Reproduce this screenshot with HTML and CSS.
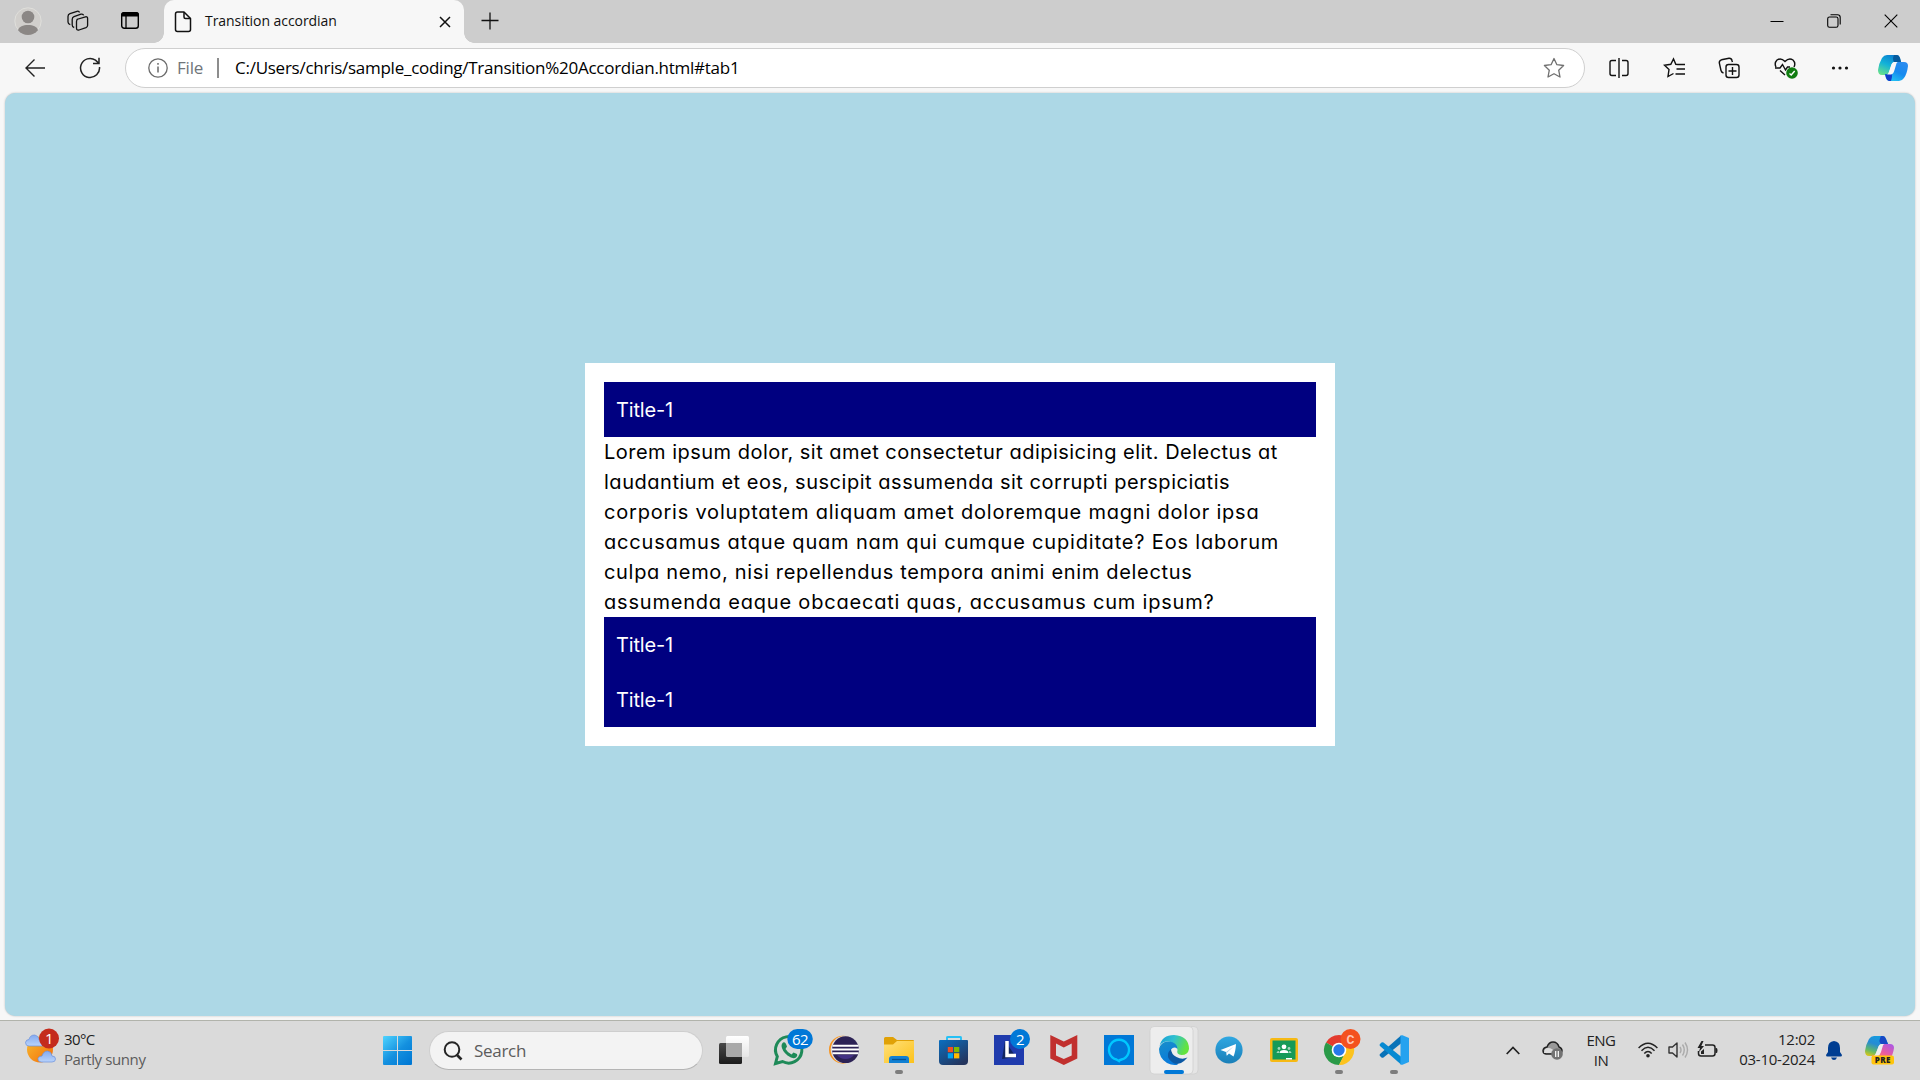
FILE: index.html
```html
<!DOCTYPE html>
<html lang="en">
<head>
<meta charset="utf-8">
<title>Transition accordian</title>
<link rel="stylesheet" href="styles.css">
</head>
<body>
<div class="screen">
  <header class="tabstrip">
    <svg class="profile" width="28" height="28" viewBox="0 0 28 28"><circle cx="14" cy="14" r="13.2" fill="#d1cfcc" stroke="#dfdfdb"/><circle cx="14" cy="10" r="6.3" fill="#8b8785"/><path d="M4 23.3C5 19.500 9 18 14 18s9 1.500 10 5.300A13 13 0 0 1 4 23.300Z" fill="#8b8785"/></svg>
    <svg class="workspaces" width="22" height="22" viewBox="0 0 22 22" fill="none" stroke="#111" stroke-width="1.300" stroke-linejoin="round"><path d="M9.500 9.500 18.500 6.800Q20.600 6.500 20.600 8.500V15.500Q20.500 17 19 17.600L12 20Q9.500 20.600 9.500 18V11.500Q9.500 9.800 11 9"/><path d="M7.200 17.500Q5.200 17 5.200 15V9.500Q5.200 7.500 7 6.700L14 4.200Q16.200 3.700 16.600 5.400"/><path d="M3.300 14.600Q1 14 1 12V6.500Q1 4.500 3 3.700L10 1.300Q12 .8 12.500 2.500"/></svg>
    <svg class="tabactions" width="20" height="20" viewBox="0 0 20 20"><rect x="1.700" y="1.700" width="16.600" height="15.600" rx="2.500" fill="none" stroke="#000" stroke-width="1.400"/><path d="M1 5.500V4Q1 1 4 1H16Q19 1 19 4V5.500Z"/><path d="M6 5V17" stroke="#000" stroke-width="1.300"/></svg>
    <div class="tab">
      <svg width="18" height="22" viewBox="0 0 18 22" fill="none" stroke="#111" stroke-width="1.500" stroke-linejoin="round"><path d="M3.500 1H10L16.500 7.500V18.500Q16.500 20.500 14.500 20.500H3.500Q1.500 20.500 1.500 18.500V3Q1.500 1 3.500 1Z"/><path d="M10 1V6Q10 7.500 11.500 7.500H16.500"/></svg>
      <span class="tab-title">Transition accordian</span>
      <svg class="tab-close" width="12" height="12" viewBox="0 0 12 12" stroke="#111" stroke-width="1.500"><path d="M1 1 11 11M11 1 1 11"/></svg>
    </div>
    <svg class="newtab" width="18" height="18" viewBox="0 0 18 18" stroke="#111" stroke-width="1.300"><path d="M9 .5V17.500M.5 8.500H17.500"/></svg>
    <div class="window-buttons">
      <svg width="14" height="14" viewBox="0 0 14 14" stroke="#000"><path d="M.5 7.500H13.500"/></svg>
      <svg width="14" height="14" viewBox="0 0 14 14" stroke="#000" stroke-width="1.100" fill="none"><rect x=".7" y="3" width="10.300" height="10.300" rx="1.800"/><path d="M3.500 .8H10.500Q13.200 .8 13.200 3.500V10.500"/></svg>
      <svg width="14" height="14" viewBox="0 0 14 14" stroke="#000" stroke-width="1.100"><path d="M.7 .7 13.300 13.300M13.300 .7 .7 13.300"/></svg>
    </div>
  </header>

  <nav class="toolbar">
    <svg class="back" width="20" height="18" viewBox="0 0 20 18" fill="none" stroke="#222" stroke-width="1.400"><path d="M9.500 .5 1 9 9.500 17.500M1 9H20"/></svg>
    <svg class="reload" width="22" height="22" viewBox="0 0 22 22" fill="none" stroke="#222" stroke-width="1.500"><path d="M20.500 10A9.500 9.500 0 1 1 16.500 3.200L20 6.500M20 .8V6.500H14"/></svg>
    <div class="address">
      <svg width="20" height="20" viewBox="0 0 20 20" fill="none" stroke="#6b6b6b" stroke-width="1.300"><circle cx="10" cy="10" r="9.200"/><path d="M10 8.500V14.500M10 5V6.800" stroke-width="1.500"/></svg>
      <span class="scheme">File</span>
      <span class="divider"></span>
      <span class="url">C:/Users/chris/sample_coding/Transition%20Accordian.html#tab1</span>
      <svg class="star" width="22" height="22" viewBox="0 0 22 22" fill="none" stroke="#707070" stroke-width="1.300" stroke-linejoin="round"><path d="M11 1.500 13.900 7.700 20.600 8.500 15.700 13.200 17 20 11 16.700 5 20 6.300 13.200 1.400 8.500 8.100 7.700Z"/></svg>
    </div>
    <div class="actions">
      <svg viewBox="0 0 22 22"><path d="M8 3.500H4Q2 3.500 2 5.500V16.500Q2 18.500 4 18.500H8M14 3.500H18Q20 3.500 20 5.500V16.500Q20 18.500 18 18.500H14M11 1V21"/></svg>
      <svg viewBox="0 0 22 22"><path d="M15 7.500 12.800 7.300 10.500 2 7.800 7.300 1.500 8.300 6 12.500 5 19.500 10.500 16.500M13.500 7.500H22M13.500 12H22M12.500 17H22"/></svg>
      <svg viewBox="0 0 22 22"><rect x="8" y="7.500" width="13" height="13" rx="2.500"/><path d="M14.500 10V18M10.500 14H18.500M5.500 16Q3.500 15.500 3 13.500L1.300 6Q1 3.500 3.500 2.800L11 1.200Q13.500 1 14 3.500L14.400 5"/></svg>
      <svg viewBox="0 0 24 22"><path d="M2 10Q0 6 3 3Q7 .5 11 4.500Q15 .5 19 3Q22 6 20 10M1 11H6L8.500 7.500 11.500 13 13.500 10H16M6 13.500 11 18"/><circle cx="18" cy="16" r="5.800" fill="#107c10" stroke="none"/><path d="M15.500 16.500 17.200 18 20.700 14" stroke="#fff"/></svg>
      <svg viewBox="0 0 22 22"><g fill="#111" stroke="none"><circle cx="4.500" cy="11" r="1.600"/><circle cx="11" cy="11" r="1.600"/><circle cx="17.500" cy="11" r="1.600"/></g></svg>
      <svg class="copilot" viewBox="0 0 30 28"><defs>
        <linearGradient id="cpA" x1=".7" y1="0" x2=".2" y2="1"><stop stop-color="#0b7bd0"/><stop offset=".5" stop-color="#12b2d8"/><stop offset="1" stop-color="#67e08c"/></linearGradient>
        <linearGradient id="cpB" x1=".8" y1="0" x2=".2" y2="1"><stop stop-color="#2b8cf0"/><stop offset=".5" stop-color="#168aef"/><stop offset="1" stop-color="#22c9f3"/></linearGradient></defs>
        <path d="M13 1H19Q21 1 22 4L23 8H17Q14 8 13 12L11 18Q10 21 7 21H4Q0 21 0 16Q1 9 4 4Q6 1 9 1Z" fill="url(#cpA)" stroke="none"/><path d="M16 1H19Q21 1 22 4L23 8H16Q14 5 16 1Z" fill="#075b9d" stroke="none"/>
        <path d="M17 27H11Q9 27 8 24L7 20Q12 21 13 18L16 11Q17 8 20 8H26Q30 8 30 12Q29 20 26 24Q24 27 21 27Z" fill="url(#cpB)" stroke="none"/><path d="M7 20Q12 21 13 18Q15 21 13 27H11Q9 27 8 24Z" fill="#123dca" stroke="none"/><path d="M19.500 8H16.500Q14 8 13 12L11 18Q10.500 20 9 20.500H13Q15.500 20 16.500 16L18 11Q18.500 8.500 19.500 8Z" fill="#f7f7f7" stroke="none"/></svg>
    </div>
  </nav>

  <div class="viewport">
    <main class="page">
      <section class="accordion">
        <a class="title">Title-1</a>
        <p class="content">
          <span class="l1">Lorem ipsum dolor, sit amet consectetur adipisicing elit. Delectus at</span>
          <span class="l2">laudantium et eos, suscipit assumenda sit corrupti perspiciatis</span>
          <span class="l3">corporis voluptatem aliquam amet doloremque magni dolor ipsa</span>
          <span class="l4">accusamus atque quam nam qui cumque cupiditate? Eos laborum</span>
          <span class="l5">culpa nemo, nisi repellendus tempora animi enim delectus</span>
          <span class="l6">assumenda eaque obcaecati quas, accusamus cum ipsum?</span>
        </p>
        <a class="title">Title-1</a>
        <a class="title">Title-1</a>
      </section>
    </main>
  </div>

  <footer class="taskbar">
    <div class="weather">
      <svg width="36" height="36" viewBox="0 0 36 36"><defs><linearGradient id="sun" x1="0" y1="0" x2="1" y2="1"><stop stop-color="#f7bd2f"/><stop offset="1" stop-color="#f36c0a"/></linearGradient><linearGradient id="cld" x2="0" y2="1"><stop stop-color="#83aaf0"/><stop offset="1" stop-color="#b9d3fb"/></linearGradient></defs><circle cx="15" cy="21.500" r="13" fill="url(#sun)"/><g fill="url(#cld)" stroke="#6c91db" stroke-width=".7"><path d="M4 18Q.5 18 .5 14.500 1 11.500 4 11.500 5 7 9.500 7 14 8 14 12H18V18Z"/><path d="M16 34Q12.500 33.500 13 30.500 13.500 28 17 28 18.500 23 22.500 23 26.500 23.500 27 28 30.500 28 30.500 31 30.500 34 27 34Z"/></g><circle cx="24" cy="10.500" r="10" fill="#c42b1c"/><text x="24" y="16" class="badge">1</text></svg>
      <div class="weather-text"><span class="temp">30°C</span><span class="cond">Partly sunny</span></div>
    </div>
    <svg class="start" width="29" height="29" viewBox="0 0 29 29"><defs><linearGradient id="win" gradientUnits="userSpaceOnUse" x1="0" y1="0" x2="26" y2="29"><stop stop-color="#4fd4ff"/><stop offset=".55" stop-color="#1490df"/><stop offset="1" stop-color="#0078d4"/></linearGradient></defs><path d="M1 0H14V14H0V1Q0 0 1 0ZM15 0H28Q29 0 29 1V14H15ZM0 15H14V29H1Q0 29 0 28ZM15 15H29V28Q29 29 28 29H15Z" fill="url(#win)"/></svg>
    <div class="search"><svg width="20" height="20" viewBox="0 0 20 20" fill="none" stroke="#252525" stroke-width="2"><circle cx="9" cy="8.500" r="7.300"/><path d="M13.500 13.500 18.500 18.500" stroke-width="2.600"/></svg><span>Search</span></div>
    <div class="apps">
      <svg viewBox="0 0 55 59"><defs><linearGradient id="tvd" x2="0" y2="1"><stop stop-color="#484848"/><stop offset="1" stop-color="#1c1c1c"/></linearGradient><linearGradient id="tvl" x2="0" y2="1"><stop stop-color="#fff"/><stop offset="1" stop-color="#e6e6e6"/></linearGradient></defs><rect x="19" y="15" width="23" height="21" rx="1.500" fill="url(#tvl)"/><rect x="12" y="22" width="23" height="21" rx="1.500" fill="url(#tvd)"/><path d="M19 22H35V36H20.500Q19 36 19 34.500Z" fill="#a9a9a9"/></svg>
      <svg viewBox="0 0 55 59"><path d="M13.500 42.500 15.300 35.500A13.200 13.200 0 1 1 20.500 40.500Z" fill="none" stroke="#1e8a58" stroke-width="3"/><path d="M21 21.500Q23 20.500 24 23L25 25.500 23.500 28Q26 32 29.500 33.500L31.500 31.500 35 33Q36 34.500 34 36.500 31 38.500 25.500 34.500 20 30 19.500 25 19.500 22.500 21 21.500Z" fill="#1e8a58"/><rect x="25.300" y="8" width="25.500" height="20" rx="10" fill="#0078d7"/><text x="38" y="23.500" class="badge">62</text></svg>
      <svg viewBox="0 0 55 59"><circle cx="26" cy="28.700" r="14" fill="#f7941e"/><circle cx="27.300" cy="28.700" r="13.600" fill="#ddd"/><circle cx="28.500" cy="28.700" r="13.400" fill="#2c2255"/><path d="M20 34H37Q34 38 28.500 38T20 34Z" fill="#433285"/><path d="M15.500 24.800H41.500M15 28.500H42M15.500 32.200H41.500" stroke="#fff" stroke-width="1.900"/></svg>
      <svg viewBox="0 0 55 59"><defs><linearGradient id="fld" x2="1" y2="1"><stop stop-color="#ffe07a"/><stop offset="1" stop-color="#fcc21b"/></linearGradient></defs><path d="M12 24V17.500Q12 16 13.500 16H21L25 19H41Q42 19 42 20V25Z" fill="#e0a106"/><path d="M12 23.500H21L25 20H42V42H12Z" fill="url(#fld)"/><path d="M17 42V38Q17 35 20 35H34Q37 35 37 38V42Z" fill="#1180d3"/><path d="M20 38.500H34" stroke="#075291" stroke-width="1.300"/><rect class="dot" x="23" y="49" width="8" height="4" rx="2"/></svg>
      <svg viewBox="0 0 55 59"><defs><linearGradient id="sto" x2=".7" y2="1"><stop stop-color="#0a6fc0"/><stop offset="1" stop-color="#24355e"/></linearGradient></defs><path d="M20 20V16.500Q20 16 21 16H33Q34 16 34 16.500V20" fill="none" stroke="#25c0f5" stroke-width="1.900"/><path d="M12 19.500Q12 19 13 19H40Q41 19 41 19.500V40Q41 44 37 44H16Q12 44 12 40Z" fill="url(#sto)"/><path d="M20.800 26H26V31.200H20.800Z" fill="#f25022"/><path d="M27 26H32.300V31.200H27Z" fill="#7fba00"/><path d="M20.800 32.200H26V37.400H20.800Z" fill="#00a4ef"/><path d="M27 32.200H32.300V37.400H27Z" fill="#ffb900"/></svg>
      <svg viewBox="0 0 55 59"><path d="M12 14H42V44H12Z" fill="#1f3bad"/><path d="M23 20 20 38 34 36Z" fill="#102460"/><path d="M25 20V34.500H34" fill="none" stroke="#fff" stroke-width="3.500"/><circle cx="38" cy="18" r="10" fill="#0078d7"/><text x="38" y="23.500" class="badge">2</text></svg>
      <svg viewBox="0 0 55 59"><path d="M13.300 14 26.800 20.500 40.300 14V37.500L26.800 44 13.300 37.500ZM19 22.500V34.500L26.800 38 34.700 34.500V22.500L26.800 26.500Z" fill="#c1302e" fill-rule="evenodd"/></svg>
      <svg viewBox="0 0 55 59"><path d="M12 14H42V44H12Z" fill="#0078d7"/><path d="M24.500 38.500A10 10 0 1 1 29.500 38.500Q27.500 39 27 40Z" fill="none" stroke="#00c8ff" stroke-width="2.400"/></svg>
      <svg viewBox="0 0 55 59"><defs><linearGradient id="eg" x2="1" y2=".3"><stop stop-color="#159bd7"/><stop offset=".5" stop-color="#30c0d0"/><stop offset="1" stop-color="#63e33f"/></linearGradient><linearGradient id="eb" x2=".4" y2="1"><stop stop-color="#198fca"/><stop offset="1" stop-color="#087adb"/></linearGradient></defs><rect x="10" y="5.500" width="41" height="47.500" rx="4" fill="#e5e5e5" stroke="#cfcfcf" stroke-width=".8"/><rect x="3" y="5.500" width="43" height="47.500" rx="4" fill="#ededed" stroke="#cfcfcf" stroke-width=".8"/><path d="M12.500 25Q15 14 27 14 42 15 42 28 41 34 34.500 34 29 33.500 30.500 29 30 24 22 20.500 15 20 12.500 25Z" fill="url(#eg)"/><path d="M12 28Q14 20 22 20.500 30 21 30.500 28 27 25 24 28.500 19.500 36 27 41 L31 43.500Q26 45 20 42 12 37 12 28Z" fill="url(#eb)"/><path d="M24 28Q19 33 22 38 29 47 37 40L40.500 36.500Q35 39 29.500 36 24 33 24 28Z" fill="#0c59a4"/><rect x="17" y="49" width="20" height="4" rx="2" fill="#0078d7"/></svg>
      <svg viewBox="0 0 55 59"><defs><linearGradient id="tg" x2="0" y2="1"><stop stop-color="#30a8e2"/><stop offset="1" stop-color="#1a7fb8"/></linearGradient></defs><circle cx="27" cy="29" r="13.600" fill="url(#tg)"/><path d="M18.500 29 34 23Q33.500 31 31.500 35.500L27 32.500 24.800 34.700 24 31Z" fill="#fff"/><path d="M24 31 31.500 25.500 25 31.800 24.800 34.700Z" fill="#a9cfe6"/></svg>
      <svg viewBox="0 0 55 59"><rect x="13" y="17" width="28" height="24" rx="2" fill="#f6b914"/><path d="M15.500 19.500H38.500V38.500H15.500Z" fill="#169a58"/><g fill="#fff"><circle cx="27" cy="25.800" r="2.400"/><path d="M22.500 32Q22.500 29 27 29T31.500 32ZM29 37H35V38.500H29Z"/><g opacity=".6"><circle cx="22" cy="27.500" r="1.400"/><circle cx="32" cy="27.500" r="1.400"/><path d="M19.500 32Q19.500 30 22 30V32ZM34.500 32Q34.500 30 32 30V32Z"/></g></g></svg>
      <svg viewBox="0 0 55 59"><path d="M27 29 14 21.500A15 15 0 0 1 40 21.500Z" fill="#e33b2e"/><path d="M27 29 14 21.500A15 15 0 0 0 27 44L33.500 32Z" fill="#2a9a48"/><path d="M27 22H40.500A15 15 0 0 1 27 44L33 32Z" fill="#fcc31e"/><circle cx="27" cy="29" r="7.300" fill="#fff"/><circle cx="27" cy="29" r="5.700" fill="#2878ea"/><circle cx="38.500" cy="18" r="10" fill="#f4511e"/><text x="38.500" y="22.500" class="chrome-badge">C</text><rect class="dot" x="23" y="49" width="8" height="4" rx="2"/></svg>
      <svg viewBox="0 0 55 59"><path d="M34 14.500 13 33Q12 34 13 35L14.500 36.500Q15.500 37 16.500 36.500L34.500 22Z" fill="#0872b8"/><path d="M34 43.500 13 25Q12 24 13 23L14.500 21.500Q15.500 21 16.500 21.500L34.500 36Z" fill="#078ad2"/><path d="M33.500 14.500Q34.500 14 35.500 14.200L42 17V41L35.500 43.800Q34.500 44 33.500 43.500Z" fill="#25a2ef"/><rect class="dot" x="23" y="49" width="8" height="4" rx="2"/></svg>
    </div>
    <div class="tray">
      <svg class="chevron" width="14" height="9" viewBox="0 0 14 9" fill="none" stroke="#222" stroke-width="1.700"><path d="M.7 8 7 1.500 13.300 8"/></svg>
      <svg class="cloud" width="22" height="20" viewBox="0 0 22 20"><path d="M4 14Q1 13.500 1 10.500 1.500 7.500 5 7 7 2 11 2 15.500 2 17 7 20 8 20 11L19 14Z" fill="#999" stroke="#222" stroke-width="1.500"/><path d="M2 13Q2 8 6 8 11 8 13 13Z" fill="#ddd"/><circle cx="15" cy="14" r="5.800" fill="#737373"/><path d="M13.700 11V17M16.300 11V17" stroke="#fff" stroke-width="1.200"/></svg>
      <div class="lang"><span>ENG</span><span>IN</span></div>
      <svg class="wifi" width="20" height="16" viewBox="0 0 20 16" fill="none" stroke="#222" stroke-width="1.500"><path d="M.6 6Q10-3.500 19.400 6M3.500 8.700Q10 2 16.500 8.700M6.300 11.400Q10 7.500 13.700 11.400"/><circle cx="10" cy="13.700" r="1.800" fill="#222" stroke="none"/></svg>
      <svg class="volume" width="21" height="18" viewBox="0 0 21 18" fill="none" stroke="#333" stroke-width="1.400"><path d="M1 6H4.500L9 2V16L4.500 12H1Z" stroke-linejoin="round"/><path d="M12 6Q14 9 12 12M14.500 3.500Q18 9 14.500 14.500M17 1.500Q22 9 17 16.500" stroke="#aaa"/></svg>
      <svg class="battery" width="21" height="18" viewBox="0 0 21 18" fill="none" stroke="#222" stroke-width="1.500"><path d="M8 4H15.500Q18 4 18 6.500V12.500Q18 15 15.500 15H4Q1.500 15 1.500 12.500V10"/><path d="M18.500 7H19.500Q20.500 7 20.500 9.500T19.500 12H18.500Z" fill="#222" stroke="none"/><path d="M4.500 0 .5 7H3L2 11 7 5H4.300L6.500 0ZM4 10.500 7 8V13H4Z" fill="#222" stroke="none"/></svg>
      <div class="clock"><span>12:02</span><span>03-10-2024</span></div>
      <svg class="bell" width="16" height="19" viewBox="0 0 16 19" fill="#003e92"><path d="M8 0Q14 .5 14 7V11L16 14Q16 15.500 14.500 15.500H1.500Q0 15.500 0 14L2 11V7Q2 .5 8 0ZM5 16.500H11Q10 19 8 19T5 16.500Z"/></svg>
      <svg class="pre" width="30" height="29" viewBox="0 0 30 29"><defs><linearGradient id="pa" x1=".6" x2=".2" y2="1"><stop stop-color="#149de0"/><stop offset=".4" stop-color="#258bd4"/><stop offset=".75" stop-color="#63b966"/><stop offset="1" stop-color="#d6c61b"/></linearGradient><linearGradient id="pb" x1="1" x2=".2" y2="1"><stop stop-color="#a457ed"/><stop offset=".6" stop-color="#ed5c9b"/><stop offset="1" stop-color="#ff8757"/></linearGradient></defs><path d="M9 0H18Q20 0 21 3L23 8H18Q14 8 13 12L11 17Q10 20 7 20H4Q0 20 0 15 1 8 4 3 6 0 9 0Z" fill="url(#pa)"/><path d="M16 0H18Q20 0 21 3L23 8H16Q13 5 16 0Z" fill="#1748c5"/><path d="M20 8H25Q29 8 29 12 28 19 25 23H7V19Q12 21 14 17L16 11Q17 8 20 8Z" fill="url(#pb)"/><path d="M19 8H16.500Q14 8 13 12L11 17Q10.500 19 9 20H13Q15 19 16 16L17.500 11Q18 8.500 19 8Z" fill="#eee"/><rect x="6.500" y="19.500" width="22.500" height="9" rx="2" fill="#ffc40c"/><text x="17.800" y="26.900" class="pre-label">PRE</text></svg>
    </div>
  </footer>
</div>
</body>
</html>
```
FILE: styles.css
```css
* { box-sizing: border-box; }
body { margin: 0; font-family: "Open Sans", "Noto Sans", sans-serif; }
svg { display: block; flex: none; }
.screen { width: 1920px; height: 1080px; display: flex; flex-direction: column; overflow: hidden; background: #f7f7f7; }

.tabstrip { height: 43px; display: flex; align-items: center; background: #cdcdcd; padding: 0 0 1px 14px; }
.workspaces { margin-left: 25px; }
.tabactions { margin-left: 31px; }
.tab { position: relative; width: 300px; height: 43px; margin: 0 0 -1px 24px; padding: 0 13px 0 10px; display: flex; align-items: center; background: #f7f7f7; border-radius: 10px 10px 0 0; }
.tab::before, .tab::after { content: ""; position: absolute; bottom: 0; width: 10px; height: 10px; }
.tab::before { left: -10px; background: radial-gradient(circle at 0 0, #cdcdcd 9.5px, #f7f7f7 10px); }
.tab::after { right: -10px; background: radial-gradient(circle at 100% 0, #cdcdcd 9.5px, #f7f7f7 10px); }
.tab-title { margin-left: 13px; padding-bottom: 2px; font-size: 14px; line-height: 20px; letter-spacing: -.06px; color: #111; white-space: nowrap; }
.tab-close { margin-left: auto; }
.newtab { margin-left: 17px; }
.window-buttons { margin-left: auto; display: flex; gap: 43px; padding-right: 22px; }

.toolbar { height: 50px; display: flex; align-items: center; padding: 0 0 1px 25px; }
.reload { margin-left: 34px; }
.address { width: 1460px; height: 40px; margin-left: 24px; padding: 0 19px 0 22px; display: flex; align-items: center; background: #fff; border: 1px solid #cfcfcf; border-radius: 20px; font-size: 17px; line-height: 24px; }
.scheme { margin-left: 9px; color: #70757a; width: 27px; letter-spacing: -.2px; }
.divider { width: 2px; height: 20px; margin-left: 13px; background: #8d8d8d; }
.url { margin-left: 16px; color: #000; white-space: nowrap; letter-spacing: -.26px; }
.star { margin-left: auto; }
.actions { display: flex; align-items: center; padding-left: 23px; gap: 33px; }
.actions svg { width: 22px; height: 22px; fill: none; stroke: #111; stroke-width: 1.4; }
.actions svg:nth-child(4) { width: 24px; margin-left: 1px; margin-right: -2px; }
.actions .copilot { width: 30px; height: 28px; margin-left: -6px; }

.viewport { height: 927px; padding: 0 5px 4px; }
.page { height: 923px; border-radius: 10px; background: #add8e6; box-shadow: 0 0 2px #b5b5b5; display: flex; align-items: center; justify-content: center; }
.accordion { width: 750px; height: 383px; padding: 19px; background: #fff; font-family: Inter, sans-serif; font-feature-settings: "cv11"; font-size: 20px; line-height: 30px; }
.title { display: block; height: 55px; padding: 13px 12px; background: #000080; color: #fff; letter-spacing: -.15px; }
.content { margin: 0; color: #000; white-space: nowrap; }
.content span { display: block; }
.l1 { letter-spacing: .48px; }
.l2 { letter-spacing: .53px; }
.l3 { letter-spacing: .79px; }
.l4 { letter-spacing: .82px; }
.l5 { letter-spacing: .68px; }
.l6 { letter-spacing: .8px; }

.taskbar { height: 60px; display: flex; align-items: center; background: #dadada; border-top: 1px solid #b1b3ab; color: #222; font-size: 15px; line-height: 20px; }
.weather { width: 382px; padding-left: 25px; display: flex; align-items: center; gap: 3px; height: 59px; }
.weather svg { margin-top: -10px; }
.weather-text { display: flex; flex-direction: column; padding-bottom: 4px; }
.temp { letter-spacing: -.6px; }
.cond { color: #5c5c5c; letter-spacing: -.4px; }
.start { margin-left: 1px; }
.search { width: 274px; height: 39px; margin-left: 17px; padding-left: 13px; display: flex; align-items: center; gap: 11px; background: #f3f3f3; border: 1px solid #cecece; border-bottom-color: #b4b4b4; border-radius: 20px; color: #5c5c5c; font-size: 17px; letter-spacing: -.3px; }
.apps { display: flex; margin-left: 4px; }
.apps svg { width: 55px; height: 59px; }
.dot { fill: #7d7d7d; }
.badge { font: 15px "Open Sans", sans-serif; fill: #fff; text-anchor: middle; letter-spacing: -.5px; }
.chrome-badge { font: bold 12px Roboto, sans-serif; fill: #ffc5b3; text-anchor: middle; }
.pre-label { font: 800 8px "Open Sans", sans-serif; fill: #222; text-anchor: middle; letter-spacing: .4px; }
.tray { display: flex; align-items: center; margin-left: 84px; padding-bottom: 1px; }
.cloud { margin-left: 22px; }
.lang { width: 50px; margin-left: 12px; padding-bottom: 1px; display: flex; flex-direction: column; align-items: center; letter-spacing: -.5px; }
.wifi { margin-left: 12px; }
.volume { margin-left: 10px; }
.battery { margin-left: 8px; }
.clock { width: 97px; padding-bottom: 3px; display: flex; flex-direction: column; align-items: flex-end; white-space: nowrap; letter-spacing: -.25px; }
.bell { margin-left: 11px; }
.pre { margin-left: 23px; }
```
